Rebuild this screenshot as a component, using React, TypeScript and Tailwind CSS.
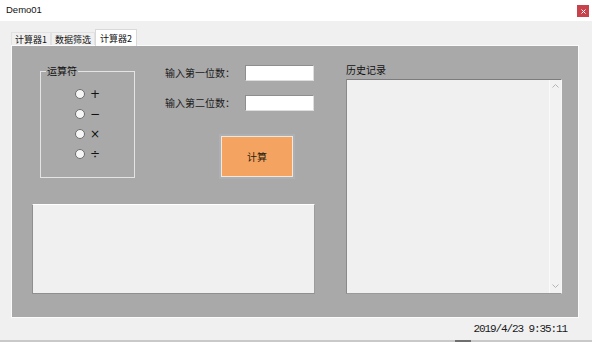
import React from 'react';

const cjk = { fontFamily: '"Noto Sans CJK SC", "Noto Sans", sans-serif' };

const ops = ['+', '−', '×', '÷'];

const Tab: React.FC<{ label: string; active?: boolean; width: string }> = ({ label, active, width }) => (
  <div
    className={`${width} flex items-center justify-center text-[9px] leading-none text-[#111] ${
      active
        ? 'h-[17px] bg-white border-t border-x border-[#d9d9d9] relative z-10 -mb-px'
        : 'h-[13px] bg-[#f0f0f0] border-t border-x border-[#e2e2e2]'
    }`}
    style={cjk}
  >
    {label}
  </div>
);

const App: React.FC = () => {
  return (
    <div className="w-[592px] h-[342px] bg-[#f0f0f0] flex flex-col overflow-hidden select-none">
      {/* Title bar */}
      <div className="h-[21px] bg-white flex items-center justify-between pl-[6px] pr-[3px]">
        <span className="text-[9.5px] text-[#111]" style={{ fontFamily: '"Liberation Sans", Arial, sans-serif' }}>
          Demo01
        </span>
        <div className="w-[12px] h-[12px] bg-[#c8424b] flex items-center justify-center mt-[1px]">
          <svg width="5" height="5" viewBox="0 0 5 5">
            <path d="M0.5 0.5 L4.5 4.5 M4.5 0.5 L0.5 4.5" stroke="#fff" strokeWidth="1" />
          </svg>
        </div>
      </div>

      {/* Tab strip */}
      <div className="h-[24px] flex items-end pl-[11px]">
        <Tab label="计算器1" width="w-[40px]" />
        <Tab label="数据筛选" width="w-[44px]" />
        <Tab label="计算器2" width="w-[42px]" active />
      </div>

      {/* Tab page */}
      <div className="flex pl-[11px]">
        <div className="w-[568px] h-[273px] border border-[#fbfbfb] bg-[#a9a9a9] flex items-start" style={cjk}>
          {/* Left column */}
          <div className="ml-[20px] w-[283px] flex flex-col">
            <div className="h-[158px] flex items-start">
              {/* Group box */}
              <div className="relative ml-[8px] mt-[25px] w-[95px] h-[107px] border border-[#e4e4e4]">
                <span className="absolute left-[5px] -top-[7px] px-px bg-[#a9a9a9] text-[10px] leading-[12px] text-[#111]">
                  运算符
                </span>
                <div className="flex flex-col pl-[34px] pt-[12px]">
                  {ops.map((op) => (
                    <div key={op} className="h-[20px] flex items-center">
                      <div className="w-[10px] h-[10px] rounded-full border border-[#6e6e6e] bg-[#f6f6f6]" />
                      <span
                        className="ml-[5px] text-[12px] leading-none text-[#111]"
                        style={{ fontFamily: '"DejaVu Sans", sans-serif' }}
                      >
                        {op}
                      </span>
                    </div>
                  ))}
                </div>
              </div>

              {/* Inputs + button */}
              <div className="ml-[30px] flex flex-col">
                <div className="mt-[19px] h-[16px] flex items-center">
                  <span className="w-[80px] text-[10px] leading-none text-[#1a1a1a]">输入第一位数：</span>
                  <div className="w-[69px] h-[16px] bg-white border-t border-l border-[#8e8e8e] border-r border-b border-r-[#dedede] border-b-[#dedede]" />
                </div>
                <div className="mt-[14px] h-[16px] flex items-center">
                  <span className="w-[80px] text-[10px] leading-none text-[#1a1a1a]">输入第二位数：</span>
                  <div className="w-[69px] h-[16px] bg-white border-t border-l border-[#8e8e8e] border-r border-b border-r-[#dedede] border-b-[#dedede]" />
                </div>
                <button className="ml-[56px] mt-[25px] w-[72px] h-[41px] bg-[#f4a460] border border-[#f3e7dc] shadow-[0_0_0_2px_rgba(176,190,204,0.35)] flex items-center justify-center text-[10px] leading-none text-[#2b1d10]">
                  计算
                </button>
              </div>
            </div>

            {/* Output box */}
            <div className="w-[283px] h-[90px] bg-[#f0f0f0] border-t border-t-white border-l border-l-[#8f8f8f] border-b border-b-[#8f8f8f] border-r border-r-[#9c9c9c]" />
          </div>

          {/* History */}
          <div className="ml-[31px] flex flex-col">
            <div className="mt-[18px] h-[15px] text-[10px] leading-[12px] text-[#111]">历史记录</div>
            <div className="w-[216px] h-[215px] bg-[#f0f0f0] border-t border-t-[#7c7c7c] border-l border-l-[#8a8a8a] border-b border-b-[#9a9a9a] border-r border-r-[#f6f6f6] flex justify-end">
              <div className="w-[12px] h-full bg-[#f2f2f2] border-l border-l-[#fafafa] flex flex-col items-center justify-between pt-[4px] pb-[5px]">
                <svg width="7" height="4" viewBox="0 0 7 4">
                  <path d="M0.5 3.5 L3.5 0.5 L6.5 3.5" stroke="#b4b4b4" strokeWidth="1" fill="none" />
                </svg>
                <svg width="7" height="4" viewBox="0 0 7 4">
                  <path d="M0.5 0.5 L3.5 3.5 L6.5 0.5" stroke="#b4b4b4" strokeWidth="1" fill="none" />
                </svg>
              </div>
            </div>
          </div>
        </div>
      </div>

      {/* Status bar */}
      <div className="h-[22px] flex items-center justify-end pr-[25px]">
        <span
          className="text-[11px] tracking-[-1.1px] text-[#1a1a1a]"
          style={{ fontFamily: '"Liberation Mono", "Courier New", monospace' }}
        >
          2019/4/23 9:35:11
        </span>
      </div>

      {/* Bottom edge */}
      <div className="h-[2px] bg-[#c9c9c9] flex pl-[455px]">
        <div className="w-[16px] h-[2px] bg-[#6f6f6f]" />
      </div>
    </div>
  );
};

export default App;
